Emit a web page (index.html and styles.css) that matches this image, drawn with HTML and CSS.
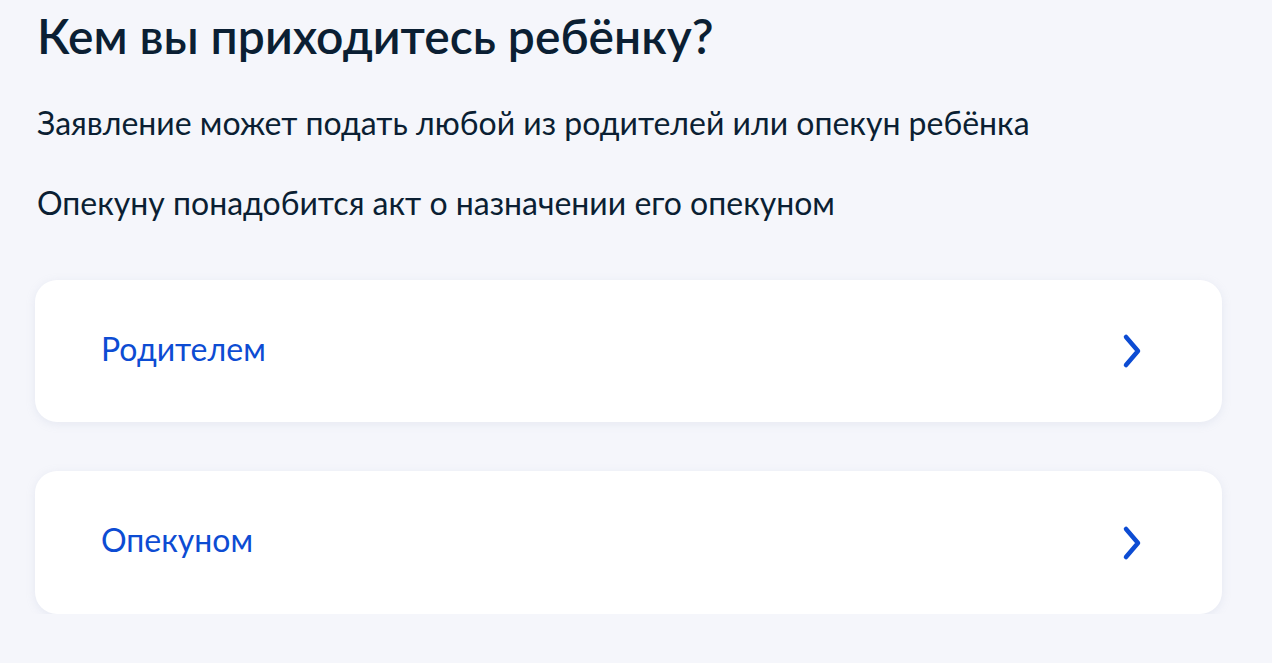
FILE: index.html
```html
<!DOCTYPE html>
<html>
<head>
    <title>Кем вы приходитесь ребёнку?</title>
    <link rel="stylesheet" href="styles.css">
</head>
<body>
    <div class="page">
        <h1 class="title">Кем вы приходитесь ребёнку?</h1>
        <p class="hint">Заявление может подать любой из родителей или опекун ребёнка</p>
        <p class="hint">Опекуну понадобится акт о назначении его опекуном</p>

        <div class="options">
            <a class="option" href="#">
                <span class="option-label">Родителем</span>
                <svg class="chevron" width="22" height="36" viewBox="0 0 22 36">
                    <path d="M5 4 L17 18 L5 32" fill="none" stroke="#0d4cd3" stroke-width="4.5" stroke-linecap="round" stroke-linejoin="round"/>
                </svg>
            </a>
            <a class="option" href="#">
                <span class="option-label">Опекуном</span>
                <svg class="chevron" width="22" height="36" viewBox="0 0 22 36">
                    <path d="M5 4 L17 18 L5 32" fill="none" stroke="#0d4cd3" stroke-width="4.5" stroke-linecap="round" stroke-linejoin="round"/>
                </svg>
            </a>
        </div>
    </div>
</body>
</html>
```

FILE: styles.css
```css
body {
    margin: 0;
    background-color: #f5f6fb;
    font-family: Lato, "Open Sans", sans-serif;
    color: #0b1f33;
}
.page {
    padding: 8px 50px 0 35px;
}
.title {
    margin: 0 0 0 2px;
    font-size: 48px;
    font-weight: 600;
    line-height: 56px;
}
.hint {
    margin: 39px 0 0 2px;
    font-size: 32px;
    line-height: 40px;
}
.hint + .hint {
    margin-top: 40px;
}
.options {
    display: flex;
    flex-direction: column;
    gap: 49px;
    margin-top: 57px;
}
.option {
    display: flex;
    align-items: center;
    justify-content: space-between;
    height: 142px;
    padding: 0 79px 0 66px;
    background-color: #fff;
    border-radius: 22px;
    box-shadow: 0 2px 10px rgba(160, 170, 200, 0.18);
    text-decoration: none;
}
.option + .option {
    height: 143px;
}
.option-label {
    padding-bottom: 6px;
    font-size: 32px;
    color: #0d4cd3;
}
.chevron {
    display: block;
}
```
